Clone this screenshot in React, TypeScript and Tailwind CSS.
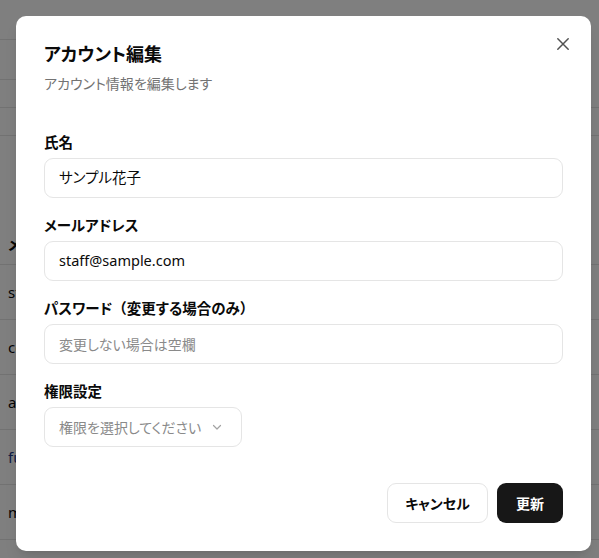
import React from "react";

const font = "font-['Noto_Sans','Noto_Sans_CJK_JP',sans-serif] [font-feature-settings:'palt']";

function Field({ label, children }: { label: React.ReactNode; children: React.ReactNode }) {
  return (
    <div className="flex flex-col gap-[6px]">
      <label className="text-[14.5px] leading-[20px] font-bold text-[#0a0a0a]">{label}</label>
      {children}
    </div>
  );
}

export default function App() {
  const rows = [
    { t: "staff@sample.com", c: "text-[#0a0a0a]" },
    { t: "company@sample.com", c: "text-[#0a0a0a]" },
    { t: "admin@sample.com", c: "text-[#0a0a0a]" },
    { t: "fukuda@sample.com", c: "text-[#1e3a8a]" },
    { t: "manager@sample.com", c: "text-[#0a0a0a]" },
  ];
  return (
    <div className={`relative w-[599px] h-[558px] overflow-hidden bg-white ${font}`}>
      {/* background page */}
      <div className="flex flex-col">
        <div className="w-[400px] h-[40px] border-b border-[#e5e5e5]" />
        <div className="w-[400px] h-[40px] border-b border-[#e5e5e5]" />
        <div className="h-[28px] border-b border-[#e5e5e5]" />
        <div className="h-[28px] border-b border-[#e5e5e5]" />
        <div className="h-[129px] border-b border-[#e5e5e5] flex items-end pb-[9px] pl-[8px]">
          <div className="w-[8px] overflow-hidden whitespace-nowrap text-[15px] font-semibold text-[#0a0a0a]">メールアドレス</div>
        </div>
        {rows.map((r) => (
          <div key={r.t} className="h-[55px] border-b border-[#e5e5e5] flex items-center pl-[8px]">
            <div className={`w-[8px] overflow-hidden whitespace-nowrap text-[15px] ${r.c}`}>{r.t}</div>
          </div>
        ))}
      </div>

      {/* overlay */}
      <div className="absolute inset-0 bg-black/50" />

      {/* dialog */}
      <div className="absolute left-[16px] top-[16px] w-[575px] bg-white rounded-[10px] shadow-lg p-7 flex flex-col">
        <button className="absolute top-5 right-5 w-4 h-4 flex items-center justify-center text-[#525252]">
          <svg width="16" height="16" viewBox="0 0 16 16" fill="none" stroke="currentColor" strokeWidth="1.5" strokeLinecap="round">
            <path d="M2.8 2.8L13.2 13.2M13.2 2.8L2.8 13.2" />
          </svg>
        </button>

        <h2 className="mt-[1px] text-[18px] leading-[18px] font-bold text-[#0a0a0a]">アカウント編集</h2>
        <p className="mt-[11px] text-[14px] leading-[20px] text-[#737373]">アカウント情報を編集します</p>

        <div className="mt-[38px] flex flex-col gap-[17px]">
          <Field label="氏名">
            <div className="h-[40px] rounded-[9px] border border-[#e5e5e5] flex items-center px-[14px] text-[14.5px] text-[#0a0a0a]">
              サンプル花子
            </div>
          </Field>
          <Field label="メールアドレス">
            <div className="h-[40px] rounded-[9px] border border-[#e5e5e5] flex items-center px-[14px] text-[14.5px] text-[#0a0a0a]">
              staff@sample.com
            </div>
          </Field>
          <Field
            label={
              <>
                パスワード<span className="[font-feature-settings:normal]">（</span>変更する場合のみ
                <span className="[font-feature-settings:normal]">）</span>
              </>
            }
          >
            <div className="h-[40px] rounded-[9px] border border-[#e5e5e5] flex items-center px-[14px] text-[14px] text-[#8a8a8a]">
              変更しない場合は空欄
            </div>
          </Field>
          <Field label="権限設定">
            <div className="w-[198px] h-[40px] rounded-[9px] border border-[#e5e5e5] flex items-center gap-[10px] pl-[14px] text-[14px] text-[#8a8a8a]">
              <span>権限を選択してください</span>
              <svg width="12" height="12" viewBox="0 0 12 12" fill="none" stroke="#a3a3a3" strokeWidth="1.2" strokeLinecap="round" strokeLinejoin="round">
                <path d="M2.5 4.5L6 8L9.5 4.5" />
              </svg>
            </div>
          </Field>
        </div>

        <div className="mt-[36px] flex justify-end gap-[9px]">
          <button className="w-[101px] h-[40px] rounded-[9px] border border-[#e5e5e5] bg-white text-[14px] font-bold text-[#0a0a0a]">
            キャンセル
          </button>
          <button className="w-[66px] h-[40px] rounded-[9px] bg-[#171717] text-[14px] font-bold text-white">
            更新
          </button>
        </div>
      </div>
    </div>
  );
}
